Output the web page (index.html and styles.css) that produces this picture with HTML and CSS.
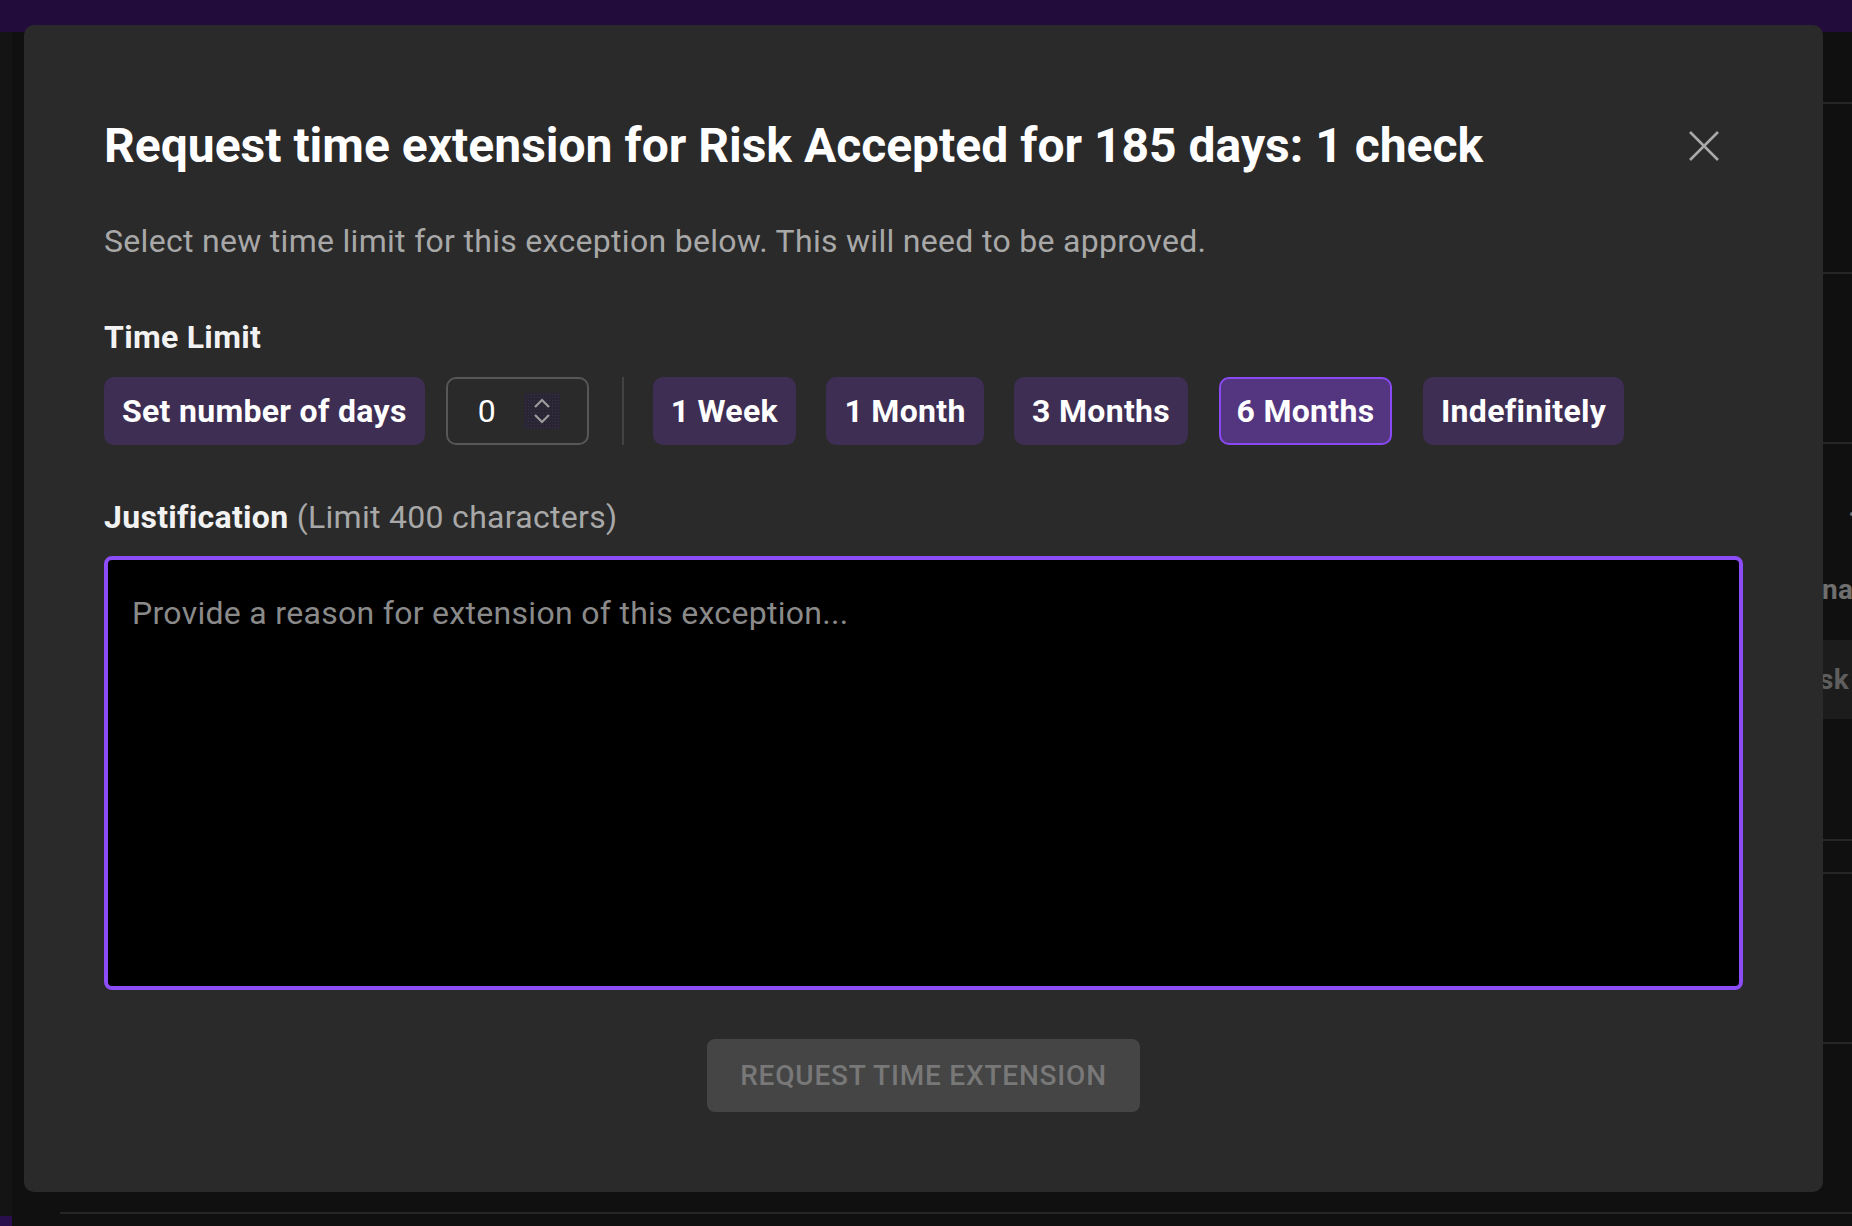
FILE: index.html
```html
<!DOCTYPE html>
<html lang="en">
<head>
    <meta charset="UTF-8">
    <meta name="viewport" content="width=device-width, initial-scale=1.0">
    <title>Request time extension</title>
    <link rel="stylesheet" href="styles.css">
</head>
<body>

<div class="app">
    <header class="topbar"></header>
    <div class="app-body">
        <aside class="sidebar">
            <span class="sidebar-mark"></span>
        </aside>
        <main class="page">
            <div class="page-row row-head"></div>
            <div class="page-row row-mid"></div>
            <div class="page-row row-mid"></div>
            <div class="page-row row-tall">
                <div class="row-side">
                    <span class="side-dot">·</span>
                    <span class="side-label">name</span>
                    <span class="side-button">Risk</span>
                </div>
            </div>
            <div class="page-row row-thin"></div>
            <div class="page-row row-mid"></div>
            <div class="page-row row-mid row-last"></div>
        </main>
    </div>
</div>

<div class="dialog" role="dialog" aria-labelledby="dialog-title">
    <div class="dialog-header">
        <h1 id="dialog-title" class="dialog-title">Request time extension for Risk Accepted for 185 days: 1 check</h1>
        <button class="close-button" aria-label="Close">
            <svg width="30" height="30" viewBox="0 0 30 30">
                <path d="M1 1 L29 29 M29 1 L1 29" stroke="#a9a9a9" stroke-width="2.6" fill="none"/>
            </svg>
        </button>
    </div>

    <p class="dialog-desc">Select new time limit for this exception below. This will need to be approved.</p>

    <div class="field-label">Time Limit</div>
    <div class="time-row">
        <button class="chip">Set number of days</button>
        <div class="days-input">
            <span class="days-value">0</span>
            <span class="spinner">
                <svg width="36" height="36" viewBox="0 0 36 36">
                    <path d="M11 14 L18 7 L25 14 M11 22 L18 29 L25 22" stroke="#9c9c9c" stroke-width="2.2" fill="none"/>
                </svg>
            </span>
        </div>
        <span class="divider"></span>
        <div class="chip-group">
            <button class="chip">1 Week</button>
            <button class="chip">1 Month</button>
            <button class="chip">3 Months</button>
            <button class="chip is-active">6 Months</button>
            <button class="chip">Indefinitely</button>
        </div>
    </div>

    <label class="field-label justification-label" for="justification">Justification <span class="label-hint">(Limit 400 characters)</span></label>
    <textarea id="justification" class="justification" maxlength="400" placeholder="Provide a reason for extension of this exception..."></textarea>

    <div class="actions">
        <button class="submit-button" disabled>Request time extension</button>
    </div>
</div>

</body>
</html>
```

FILE: styles.css
```css
body {
    margin: 0;
    font-family: Roboto, "Liberation Sans", Arial, sans-serif;
    letter-spacing: 0.3px;
    background-color: #111;
    color: #fff;
    overflow: hidden;
}

/* --- page behind the dialog --- */
.app {
    height: 100vh;
    display: flex;
    flex-direction: column;
}
.topbar {
    height: 32px;
    background-color: #220c3c;
    flex-shrink: 0;
}
.app-body {
    flex: 1;
    display: flex;
}
.sidebar {
    width: 12px;
    background-color: #141414;
    display: flex;
    flex-direction: column;
    justify-content: flex-end;
}
.sidebar-mark {
    height: 10px;
    background-color: #2a0f4d;
}
.page {
    flex: 1;
    background-color: #101010;
    overflow: hidden;
}
.page-row {
    border-bottom: 2px solid #262626;
    margin-left: 48px;
}
.row-head {
    height: 70px;
}
.row-mid {
    height: 168px;
}
.row-tall {
    height: 395px;
    display: flex;
    justify-content: flex-end;
}
.row-thin {
    height: 31px;
}
.row-last {
    height: 168px;
}
.row-side {
    width: 52px;
    display: flex;
    flex-direction: column;
    white-space: nowrap;
    overflow: hidden;
    font-size: 28px;
    font-weight: 700;
    color: #6f6f6f;
}
.side-dot {
    padding-left: 48px;
    margin-top: 50px;
    line-height: 40px;
}
.side-label {
    padding-left: 22px;
    margin-top: 36px;
    line-height: 40px;
}
.side-button {
    margin-top: 30px;
    height: 79px;
    line-height: 79px;
    text-indent: -7px;
    background-color: #1c1c1c;
    color: #5e5e5e;
}

/* --- dialog --- */
.dialog {
    position: absolute;
    top: 25px;
    left: 24px;
    width: 1799px;
    box-sizing: border-box;
    padding: 92px 80px 80px;
    background-color: #2a2a2a;
    border-radius: 10px;
}
.dialog-header {
    display: flex;
    align-items: center;
    justify-content: space-between;
}
.dialog-title {
    margin: 0;
    font-size: 48px;
    line-height: 58px;
    font-weight: 700;
    letter-spacing: 0;
    color: #fff;
}
.close-button {
    background: none;
    border: none;
    padding: 0;
    margin-right: 24px;
    width: 30px;
    height: 30px;
    cursor: pointer;
}
.close-button svg {
    display: block;
}
.dialog-desc {
    margin: 46px 0 0;
    font-size: 32px;
    line-height: 40px;
    color: #a8a8a8;
}
.field-label {
    display: block;
    margin-top: 56px;
    font-size: 32px;
    line-height: 40px;
    font-weight: 700;
    color: #f2f2f2;
}
.time-row {
    margin-top: 20px;
    display: flex;
    align-items: center;
}
.chip {
    height: 68px;
    box-sizing: border-box;
    padding: 0 16px;
    border: 2px solid transparent;
    border-radius: 10px;
    background-color: #3e2e54;
    color: #fff;
    font-family: inherit;
    font-size: 32px;
    font-weight: 700;
    letter-spacing: 0.3px;
    cursor: pointer;
}
.chip.is-active {
    background-color: #54357f;
    border-color: #8a4af3;
}
.days-input {
    margin-left: 21px;
    width: 143px;
    height: 68px;
    box-sizing: border-box;
    border: 2px solid #575757;
    border-radius: 10px;
    display: flex;
    align-items: center;
    padding-left: 30px;
}
.days-value {
    font-size: 32px;
    color: #fff;
}
.spinner {
    margin-left: 28px;
    width: 36px;
    height: 36px;
    background-color: #2a2533;
    background-image: radial-gradient(#3a2f52 1px, transparent 1px);
    background-size: 3px 3px;
}
.spinner svg {
    display: block;
}
.divider {
    width: 2px;
    height: 68px;
    margin: 0 1px 0 33px;
    background-color: #434343;
}
.chip-group {
    display: flex;
    gap: 30.5px;
    margin-left: 28px;
}
.justification-label {
    margin-top: 52px;
}
.label-hint {
    font-weight: 400;
    color: #a8a8a8;
}
.justification {
    display: block;
    margin-top: 19px;
    width: 100%;
    height: 434px;
    box-sizing: border-box;
    padding: 29px 24px 22px;
    border: 4px solid #8c4cf6;
    border-radius: 8px;
    background-color: #000;
    color: #fff;
    font-family: inherit;
    font-size: 32px;
    line-height: 48px;
    letter-spacing: 0.3px;
    resize: none;
    outline: none;
}
.justification::placeholder {
    color: #8a8a8a;
}
.actions {
    margin-top: 49px;
    display: flex;
    justify-content: center;
}
.submit-button {
    height: 73px;
    padding: 0 33px;
    border: none;
    border-radius: 8px;
    background-color: #454545;
    color: #787878;
    font-family: inherit;
    font-size: 28px;
    font-weight: 500;
    letter-spacing: 0.8px;
    text-transform: uppercase;
}
```
